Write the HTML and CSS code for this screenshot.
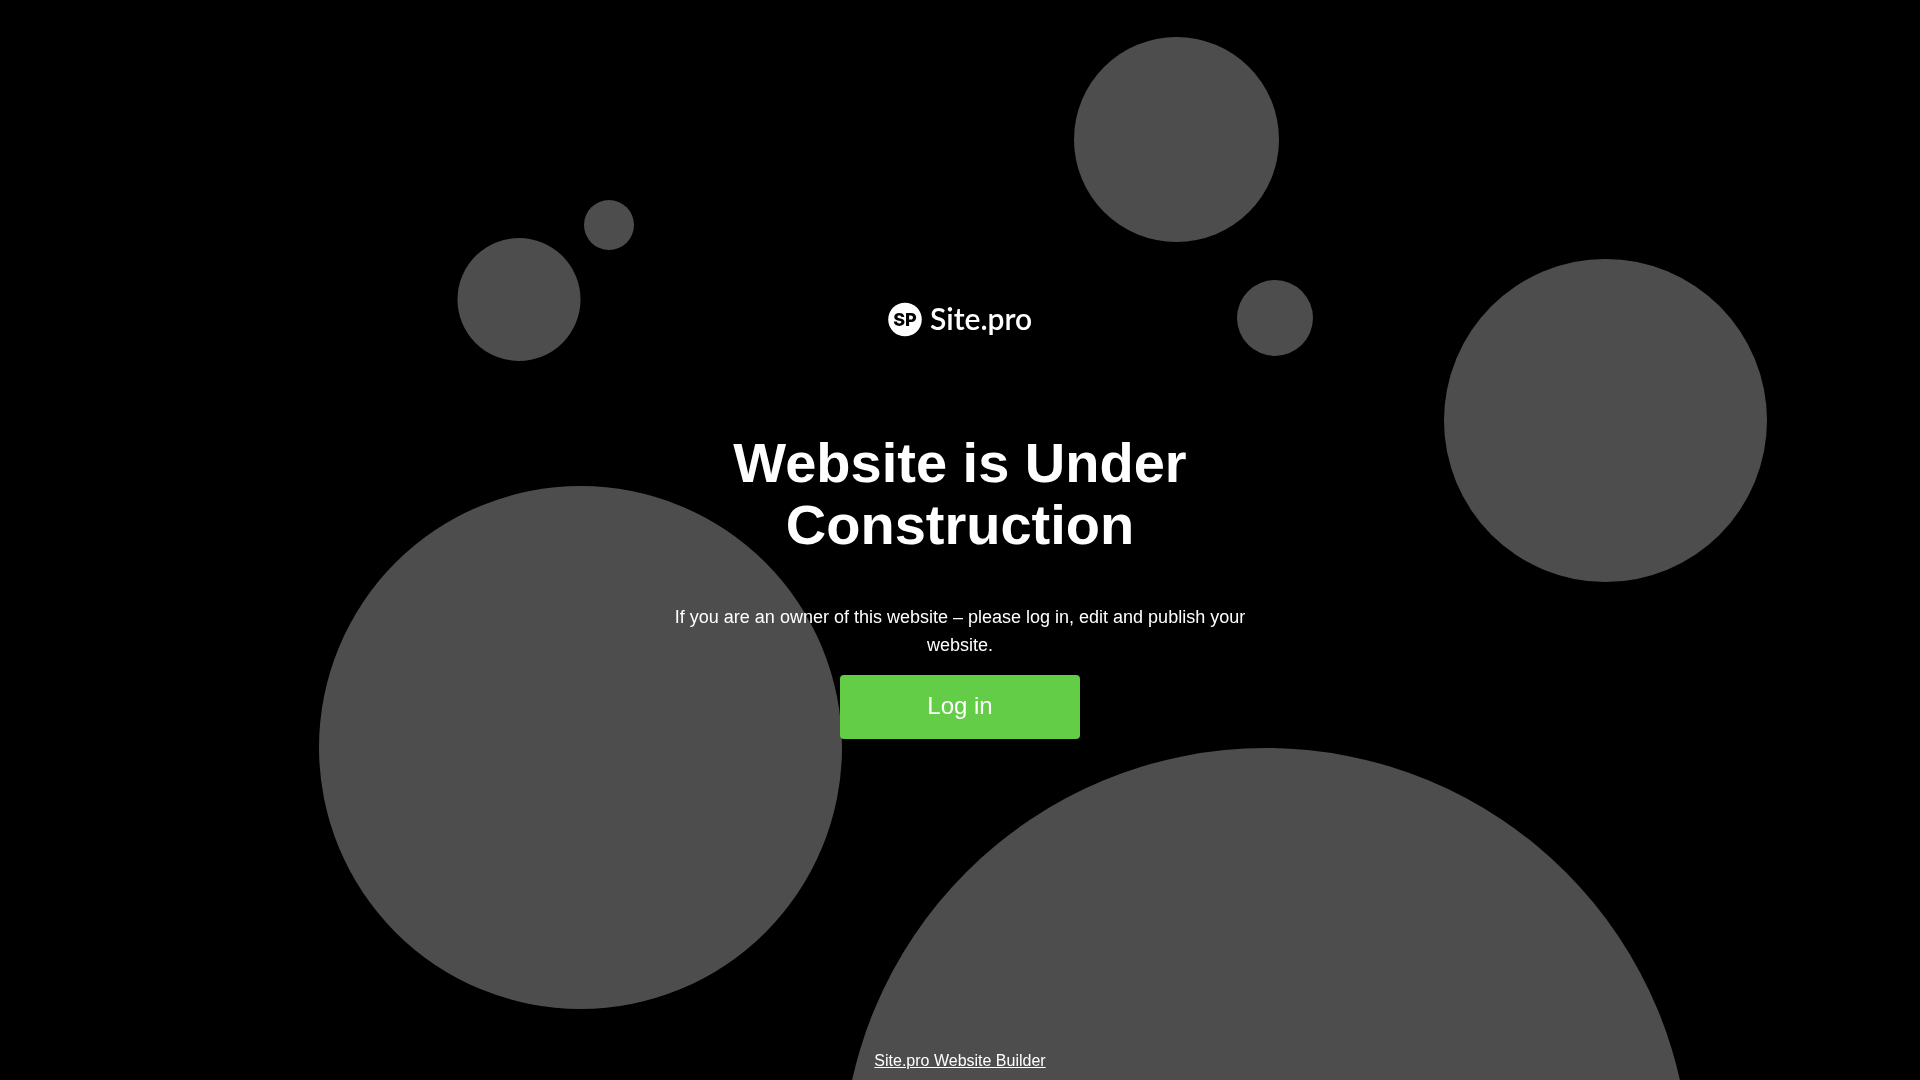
FILE: index.html
```html
<!DOCTYPE html>
<html lang="en">
<head>
<meta charset="utf-8">
<meta name="viewport" content="width=device-width, initial-scale=1">
<title>Website is Under Construction</title>
<link rel="stylesheet" href="styles.css">
</head>
<body class="page">
  <svg class="bubbles" viewBox="0 0 1920 1080" preserveAspectRatio="xMidYMid slice" aria-hidden="true">
    <circle cx="609" cy="225" r="25"/>
    <circle cx="519" cy="299.5" r="61.5"/>
    <circle cx="1176.5" cy="139.5" r="102.5"/>
    <circle cx="1275" cy="318" r="38"/>
    <circle cx="1605.5" cy="420.5" r="161.5"/>
    <circle cx="580.5" cy="747.5" r="261.5"/>
    <circle cx="1266" cy="1172" r="424"/>
  </svg>
  <main class="content">
    <svg class="logo" viewBox="0 0 146 34" role="img" aria-label="Site.pro">
      <circle class="logo-disc" cx="18" cy="16.5" r="16.8"/>
      <text class="logo-mark" x="18" y="23" text-anchor="middle">SP</text>
      <text class="logo-name" x="43" y="27">Site.pro</text>
    </svg>
    <h1 class="title">Website is Under Construction</h1>
    <p class="text">If you are an owner of this website – please log in, edit and publish your website.</p>
    <button class="login" type="button">Log in</button>
  </main>
  <footer class="footer"><a class="footer-link" href="#">Site.pro Website Builder</a></footer>
</body>
</html>
```
FILE: styles.css
```css
* {
  box-sizing: border-box;
}

.page {
  margin: 0;
  min-height: 100vh;
  display: flex;
  flex-direction: column;
  background: #000;
  color: #fff;
  font-family: "Liberation Sans", Arial, sans-serif;
}

.bubbles {
  position: fixed;
  inset: 0;
  width: 100%;
  height: 100%;
  z-index: -1;
  fill: #4d4d4d;
}

.content {
  flex: 1;
  display: flex;
  flex-direction: column;
  align-items: center;
  justify-content: center;
  width: 100%;
  max-width: 600px;
  margin: 0 auto;
  text-align: center;
}

.logo {
  width: 146px;
  height: 34px;
  margin-bottom: 95px;
  overflow: visible;
}

.logo-disc {
  fill: #fff;
}

.logo-mark {
  fill: #000;
  font: 800 18px Inter, sans-serif;
}

.logo-name {
  fill: #fff;
  font: 600 30px Lato, sans-serif;
}

.title {
  margin: 0 0 47px;
  font-size: 56px;
  line-height: 62px;
  font-weight: 700;
}

.text {
  margin: 0 0 16px;
  font-size: 18px;
  line-height: 28px;
}

.login {
  width: 240px;
  height: 64px;
  padding: 0 0 2px;
  border: 0;
  border-radius: 4px;
  background: #63cd48;
  color: #fff;
  font-family: inherit;
  font-size: 24px;
  cursor: pointer;
}

.footer {
  padding: 10px;
  text-align: center;
  font-size: 16px;
  line-height: 18px;
}

.footer-link {
  color: #fff;
}
```
